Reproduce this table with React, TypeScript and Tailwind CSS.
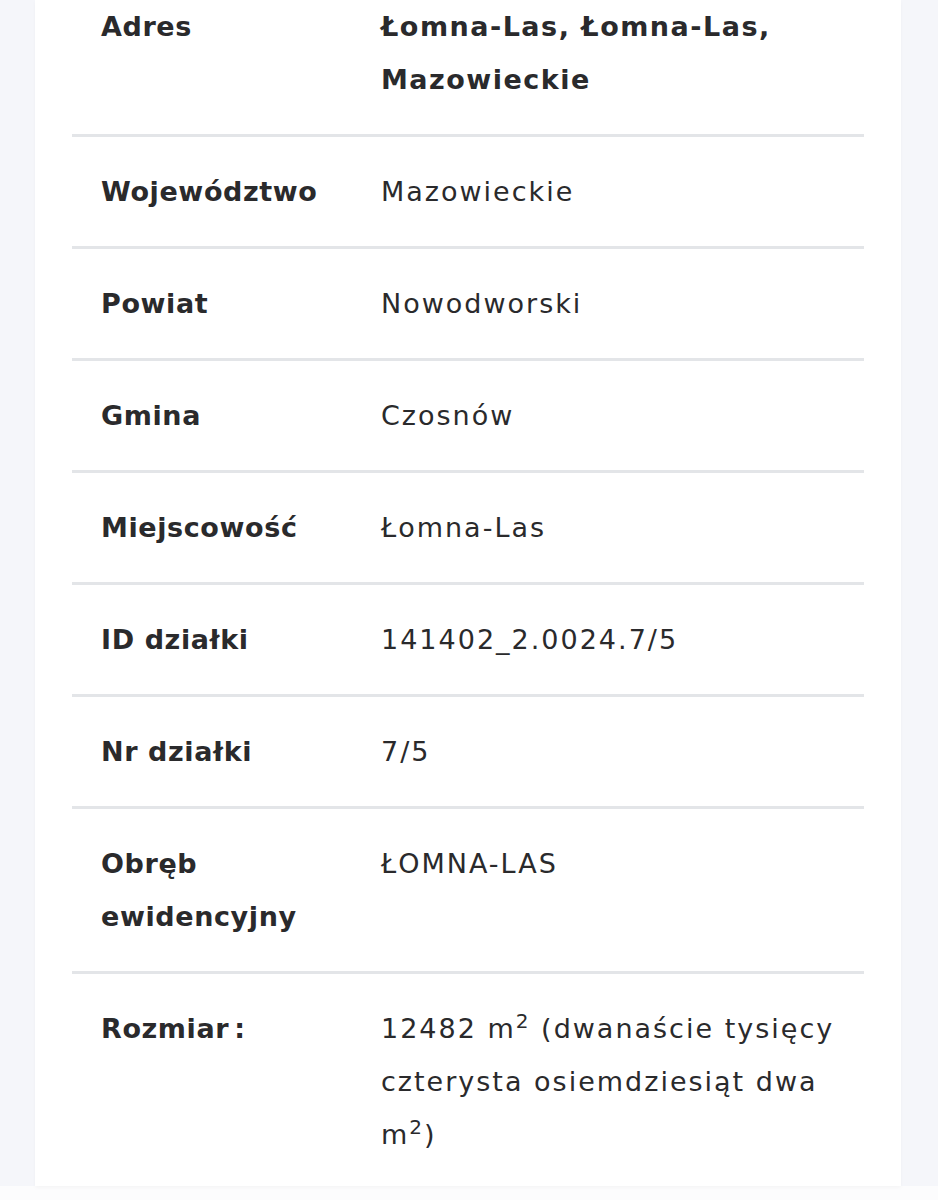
import type { ReactNode } from "react";

type Row = { label: ReactNode; value: ReactNode; bold?: boolean };

const rows: Row[] = [
  { label: "Adres", value: "Łomna-Las, Łomna-Las, Mazowieckie", bold: true },
  { label: "Województwo", value: "Mazowieckie" },
  { label: "Powiat", value: "Nowodworski" },
  { label: "Gmina", value: "Czosnów" },
  { label: "Miejscowość", value: "Łomna-Las" },
  { label: "ID działki", value: "141402_2.0024.7/5" },
  { label: "Nr działki", value: "7/5" },
  { label: "Obręb ewidencyjny", value: "ŁOMNA-LAS" },
  {
    label: (
      <>
        Rozmiar<span className="ml-[5px]">:</span>
      </>
    ),
    value: (
      <>
        12482 m<sup className="text-[20px]">2</sup> (dwanaście tysięcy czterysta osiemdziesiąt dwa m
        <sup className="text-[20px]">2</sup>)
      </>
    ),
  },
];

export default function App() {
  return (
    <div className="min-h-[1200px] bg-[#fcfcfd] font-['DejaVu_Sans',sans-serif] text-[#2a2a2c]">
      <div className="flex bg-[#f5f6fa]">
        <div className="w-[35px] shrink-0" />
        <div className="flex-1 bg-white px-[37px] shadow-[0_2px_4px_rgba(0,0,0,0.03)]">
          {rows.map((row, i) => {
            const first = i === 0;
            const last = i === rows.length - 1;
            return (
              <div
                key={i}
                className={`flex text-[27px] leading-[53px] ${first ? "pt-0" : "pt-7"} ${
                  last ? "pb-[25px]" : "pb-7 border-b-[3px] border-[#e3e5e8]"
                }`}
              >
                <div className="w-[309px] shrink-0 pl-[29px] pr-4 font-bold tracking-[0.6px]">{row.label}</div>
                <div
                  className={`flex-1 pr-[20px] ${
                    row.bold ? "font-bold tracking-[1.5px]" : "font-normal tracking-[2px]"
                  }`}
                >
                  {row.value}
                </div>
              </div>
            );
          })}
        </div>
        <div className="w-[37px] shrink-0" />
      </div>
    </div>
  );
}
